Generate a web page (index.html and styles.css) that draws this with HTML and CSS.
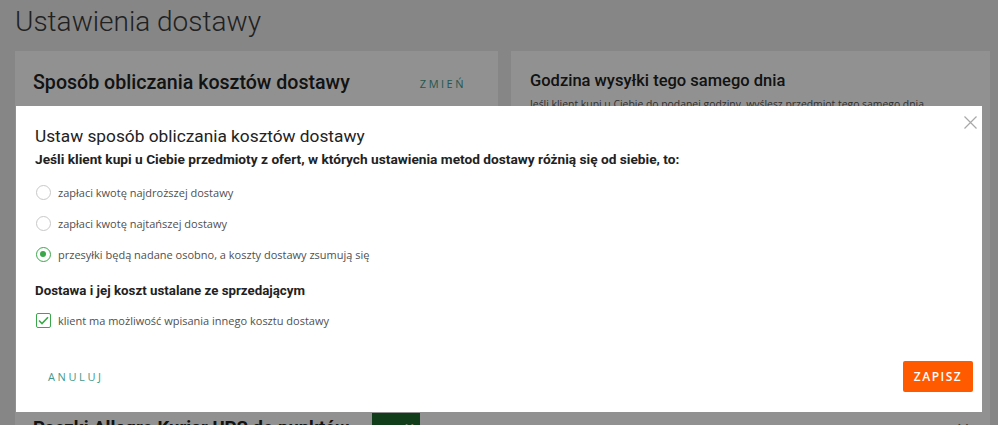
FILE: index.html
```html
<!DOCTYPE html>
<html lang="pl">
<head>
<meta charset="utf-8">
<title>Ustawienia dostawy</title>
<link rel="stylesheet" href="styles.css">
</head>
<body>
<div class="page">
  <h1 class="page-title">Ustawienia dostawy</h1>
  <div class="cards">
    <section class="card card-left">
      <div class="card-head">
        <h2 class="card-title">Sposób obliczania kosztów dostawy</h2>
        <a class="link-btn" href="#">ZMIEŃ</a>
      </div>
    </section>
    <section class="card card-right">
      <h2 class="card-title small">Godzina wysyłki tego samego dnia</h2>
      <p class="card-text">Jeśli klient kupi u Ciebie do podanej godziny, wyślesz przedmiot tego samego dnia.</p>
    </section>
  </div>
  <section class="card card-full">
    <div class="card-head">
      <h2 class="card-title bold">Paczki Allegro Kurier UPS do punktów <span class="badge">NOWOŚĆ</span></h2>
      <span class="card-close">✕</span>
    </div>
  </section>
</div>

<div class="overlay">
  <div class="modal">
    <button class="modal-close" aria-label="Zamknij">
      <svg width="13" height="13" viewBox="0 0 13 13"><path d="M0.5 0.5L12.5 12.5M12.5 0.5L0.5 12.5" stroke="#a8a8a8" stroke-width="1.2" fill="none"/></svg>
    </button>
    <h3 class="modal-title">Ustaw sposób obliczania kosztów dostawy</h3>
    <p class="modal-lead">Jeśli klient kupi u Ciebie przedmioty z ofert, w których ustawienia metod dostawy różnią się od siebie, to:</p>
    <div class="options">
      <label class="option"><span class="radio"></span>zapłaci kwotę najdroższej dostawy</label>
      <label class="option"><span class="radio"></span>zapłaci kwotę najtańszej dostawy</label>
      <label class="option"><span class="radio checked"></span>przesyłki będą nadane osobno, a koszty dostawy zsumują się</label>
    </div>
    <p class="modal-sub">Dostawa i jej koszt ustalane ze sprzedającym</p>
    <label class="option check-option"><span class="checkbox"><svg width="11" height="9" viewBox="0 0 11 9"><path d="M1 4.5L4 7.5L10 1.2" stroke="#3aa84a" stroke-width="1.6" fill="none"/></svg></span>klient ma możliwość wpisania innego kosztu dostawy</label>
    <div class="modal-foot">
      <a class="link-btn cancel" href="#">ANULUJ</a>
      <button class="save">ZAPISZ</button>
    </div>
  </div>
</div>
</body>
</html>
```

FILE: styles.css
```css
* { box-sizing: border-box; }
html, body { margin: 0; padding: 0; }
body {
  background: #ebebeb;
  font-family: Roboto, "Liberation Sans", sans-serif;
  color: #333;
  width: 998px;
  height: 425px;
  overflow: hidden;
}
.page { padding: 0 15px; }
.page-title {
  margin: 0;
  padding-top: 5px;
  height: 51px;
  font-weight: 300;
  font-size: 28px;
  line-height: 34px;
  color: #3a3a3a;
}
.cards {
  display: flex;
  gap: 13px;
  height: 346px;
}
.card { background: #fff; }
.card-left { width: 483px; padding: 18px 18px; }
.card-right { flex: 1; padding: 19px 19px; margin-right: -7px; }
.card-head { display: flex; align-items: center; justify-content: space-between; }
.card-title {
  margin: 0;
  font-size: 19.6px;
  font-weight: 500;
  color: #222;
  line-height: 28px;
}
.card-title.small { font-size: 16.5px; line-height: 22px; }
.card-title.bold { font-weight: 700; font-size: 18.5px; }
.card-text {
  margin: 5px 0 0;
  font-family: "Open Sans", sans-serif;
  font-size: 10.4px;
  color: #555;
}
.link-btn {
  font-family: "Open Sans", sans-serif;
  font-size: 11px;
  letter-spacing: 2.5px;
  color: #3f9a8c;
  text-decoration: none;
  margin-right: 14px;
}
.card-full { padding: 16px 18px; margin-right: -7px; }
.badge {
  display: inline-block;
  vertical-align: middle;
  background: #1f6b2e;
  color: #fff;
  font-size: 9px;
  padding: 2px 5px;
  margin-left: 18px;
}
.card-close { color: #555; font-size: 17px; margin-right: 2px; }

.overlay {
  position: fixed;
  inset: 0;
  background: rgba(0, 0, 0, 0.43);
  padding: 106px 16px 0;
}
.modal {
  position: relative;
  background: #fff;
  height: 306px;
  padding: 18px 19px 0;
}
.modal-close {
  position: absolute;
  right: 5px;
  top: 10px;
  width: 13px;
  height: 13px;
  border: 0;
  background: none;
  padding: 0;
  display: flex;
}
.modal-title {
  margin: 0;
  font-size: 17.3px;
  font-weight: 400;
  line-height: 24px;
  color: #222;
}
.modal-lead {
  margin: 1px 0 0;
  font-size: 13.7px;
  font-weight: 700;
  line-height: 20px;
  color: #222;
}
.options {
  display: flex;
  flex-direction: column;
  gap: 15px;
  margin-top: 15px;
}
.option {
  display: flex;
  align-items: center;
  gap: 7px;
  font-family: "Open Sans", sans-serif;
  font-size: 11px;
  color: #4f4f4f;
  height: 16px;
  padding-left: 1px;
}
.radio {
  width: 15px;
  height: 15px;
  border-radius: 50%;
  border: 1px solid #c8c8c8;
  flex: none;
  position: relative;
}
.radio.checked { border: 1.5px solid #3aa84a; }
.radio.checked::after {
  content: "";
  position: absolute;
  left: 3px; top: 3px;
  width: 6px; height: 6px;
  border-radius: 50%;
  background: #3aa84a;
}
.modal-sub {
  margin: 19px 0 0;
  font-size: 13.3px;
  font-weight: 700;
  line-height: 20px;
  color: #222;
}
.check-option { margin-top: 11px; }
.checkbox {
  width: 15px;
  height: 15px;
  border: 1.5px solid #3aa84a;
  border-radius: 2px;
  flex: none;
  display: flex;
  align-items: center;
  justify-content: center;
}
.modal-foot {
  display: flex;
  align-items: center;
  justify-content: space-between;
  margin-top: 33px;
  margin-right: -10px;
}
.cancel { margin-left: 13px; font-size: 11px; letter-spacing: 2.6px; }
.save {
  background: #ff5a00;
  color: #fff;
  border: 0;
  border-radius: 2px;
  width: 70px;
  height: 31px;
  font-family: "Open Sans", sans-serif;
  font-size: 12px;
  font-weight: 600;
  letter-spacing: 1.5px;
  padding: 0;
}
```
